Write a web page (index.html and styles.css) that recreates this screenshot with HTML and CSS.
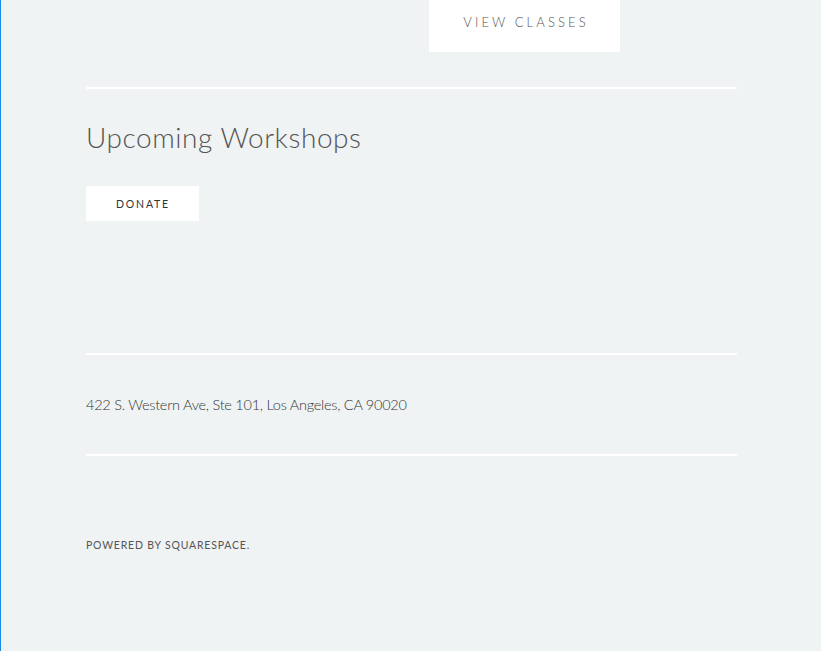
FILE: index.html
```html
<!DOCTYPE html>
<html>
<head>
<meta charset="utf-8">
<link rel="stylesheet" href="styles.css">
</head>
<body>
<div class="page">
  <div class="top-row">
    <a class="btn-large" href="#">VIEW CLASSES</a>
  </div>
  <hr class="rule rule-first">
  <section class="workshops">
    <h2 class="heading">Upcoming Workshops</h2>
    <a class="btn-small" href="#">DONATE</a>
  </section>
  <hr class="rule">
  <p class="address">422 S. Western Ave, Ste 101, Los Angeles, CA 90020</p>
  <hr class="rule">
  <p class="powered">POWERED BY SQUARESPACE.</p>
</div>
</body>
</html>
```
FILE: styles.css
```css
html, body {
  margin: 0;
  padding: 0;
  height: 100%;
}
body {
  background: #eff3f4;
  border-left: 1px solid #1a8be8;
  box-sizing: border-box;
  font-family: Lato, "Open Sans", sans-serif;
  overflow: hidden;
}
.page {
  margin-left: 85px;
  width: 651px;
}
.top-row {
  display: flex;
  padding-left: 343px;
}
.btn-large {
  display: flex;
  align-items: center;
  justify-content: center;
  width: 191px;
  height: 52px;
  padding: 0 0 8px 3px;
  background: #fff;
  color: #555;
  text-decoration: none;
  font-size: 13px;
  letter-spacing: 3.1px;
  font-weight: 300;
  box-sizing: border-box;
}
.rule {
  border: 0;
  height: 2px;
  background: #fff;
  margin: 0;
}
.rule-first {
  margin-top: 35px;
}
.workshops {
  padding-top: 30px;
  height: 264px;
  box-sizing: border-box;
}
.heading {
  margin: 0;
  font-weight: 300;
  font-size: 28px;
  color: #555;
  line-height: 36px;
  letter-spacing: 0.55px;
}
.btn-small {
  display: flex;
  align-items: center;
  justify-content: center;
  margin-top: 31px;
  width: 113px;
  height: 35px;
  padding-left: 1px;
  background: #fff;
  color: #333;
  text-decoration: none;
  font-size: 10.5px;
  font-weight: 400;
  letter-spacing: 1.8px;
  box-sizing: border-box;
}
.address {
  margin: 0;
  height: 99px;
  display: flex;
  align-items: center;
  font-size: 14.5px;
  font-weight: 300;
  color: #333;
  letter-spacing: -0.25px;
}
.powered {
  margin: 82px 0 0;
  font-size: 10.5px;
  font-weight: 400;
  letter-spacing: 0.8px;
  color: #555;
  line-height: 14px;
}
```
